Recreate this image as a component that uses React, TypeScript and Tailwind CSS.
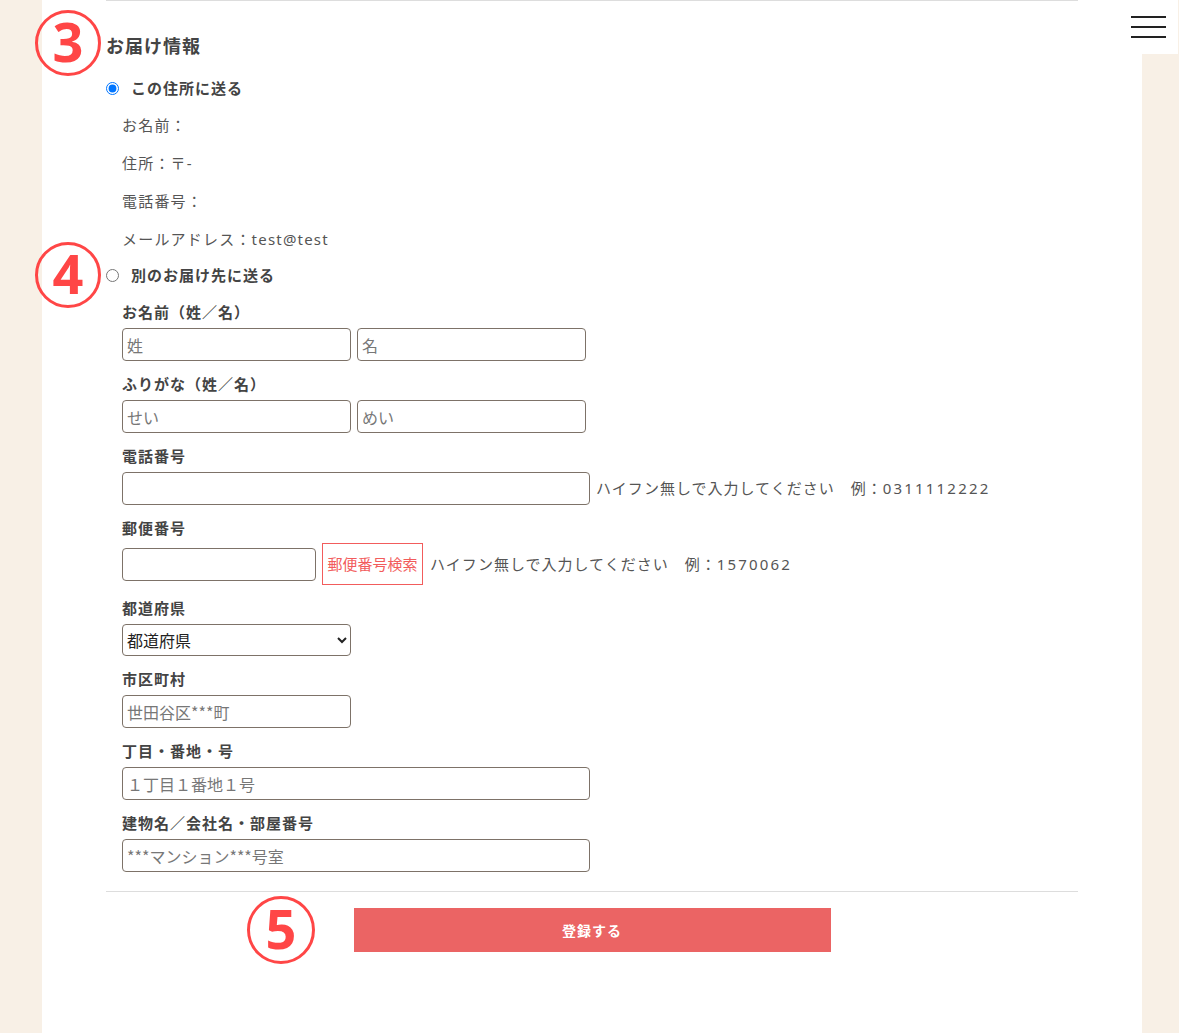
const font = "font-['Noto_Sans','Noto_Sans_CJK_JP',sans-serif]";

function Field({ label, children }: { label: string; children: React.ReactNode }) {
    return (
        <div className="flex flex-col">
            <div className="h-[22px] flex items-center text-[15px] font-bold text-[#444] tracking-[1px] mb-[5px]">{label}</div>
            {children}
        </div>
    );
}

function TextInput({ w, placeholder }: { w: string; placeholder?: string }) {
    return (
        <input
            type="text"
            placeholder={placeholder}
            className={`${w} h-[33px] border border-[#7d7268] rounded-[4px] px-[4px] text-[16px] text-[#333] bg-white font-['Noto_Sans_CJK_JP',sans-serif] placeholder:text-[#777] outline-none`}
        />
    );
}

function Hint({ text, num }: { text: string; num: string }) {
    return (
        <span className="text-[15px] text-[#555] tracking-[1px]">
            {text}　例：<span className="tracking-[2.2px]">{num}</span>
        </span>
    );
}

function Marker({ n, className }: { n: string; className: string }) {
    return (
        <div className={`absolute rounded-full border-[3.5px] border-[#ff4646] flex items-center justify-center text-[#ff4646] font-bold text-[54px] leading-none ${className}`}>
            <span className="-mt-[4px]">{n}</span>
        </div>
    );
}

export default function App() {
    const info = ["お名前：", "住所：〒-", "電話番号：", "メールアドレス：test@test"];
    return (
        <div className={`relative w-full min-h-[1033px] bg-[#f8f0e6] ${font}`}>
            <div className="ml-[42px] w-[1100px] min-h-[1033px] bg-white px-[64px]">
                <div className="h-px bg-[#dddddd]" />

                <h2 className="mt-[33px] h-[24px] flex items-center text-[18px] font-bold text-[#444] tracking-[1px]">お届け情報</h2>

                <label className="mt-[18px] h-[24px] flex items-center gap-[12px]">
                    <input type="radio" name="dest" defaultChecked className="m-0 w-[13px] h-[13px]" />
                    <span className="text-[15px] font-bold text-[#444] tracking-[1px]">この住所に送る</span>
                </label>

                <div className="mt-[6px] pl-[16px] flex flex-col">
                    {info.map((t) => (
                        <div key={t} className="h-[38px] flex items-center text-[15px] text-[#555] tracking-[1.2px]">{t}</div>
                    ))}
                </div>

                <label className="mt-[5px] h-[24px] flex items-center gap-[12px]">
                    <input type="radio" name="dest" className="m-0 w-[13px] h-[13px]" />
                    <span className="text-[15px] font-bold text-[#444] tracking-[1px]">別のお届け先に送る</span>
                </label>

                <div className="mt-[14px] pl-[16px] flex flex-col gap-[12px]">
                    <Field label="お名前（姓／名）">
                        <div className="flex gap-[6px]">
                            <TextInput w="w-[229px]" placeholder="姓" />
                            <TextInput w="w-[229px]" placeholder="名" />
                        </div>
                    </Field>
                    <Field label="ふりがな（姓／名）">
                        <div className="flex gap-[6px]">
                            <TextInput w="w-[229px]" placeholder="せい" />
                            <TextInput w="w-[229px]" placeholder="めい" />
                        </div>
                    </Field>
                    <Field label="電話番号">
                        <div className="flex items-center gap-[6px]">
                            <TextInput w="w-[468px]" />
                            <Hint text="ハイフン無しで入力してください" num="0311112222" />
                        </div>
                    </Field>
                    <div className="flex flex-col">
                        <div className="h-[22px] flex items-center text-[15px] font-bold text-[#444] tracking-[1px] mb-[4px]">郵便番号</div>
                        <div className="h-[42px] flex items-center">
                            <TextInput w="w-[194px]" />
                            <button className="ml-[6px] w-[101px] h-[42px] border border-[#f25c5c] text-[#f25c5c] text-[15px] bg-white">郵便番号検索</button>
                            <span className="ml-[7px]">
                                <Hint text="ハイフン無しで入力してください" num="1570062" />
                            </span>
                        </div>
                    </div>
                    <Field label="都道府県">
                        <select className="w-[229px] h-[32px] border border-[#7d7268] rounded-[4px] pl-0 text-[16px] text-[#222] bg-white font-['Noto_Sans_CJK_JP',sans-serif] outline-none">
                            <option>都道府県</option>
                        </select>
                    </Field>
                    <Field label="市区町村">
                        <TextInput w="w-[229px]" placeholder="世田谷区***町" />
                    </Field>
                    <Field label="丁目・番地・号">
                        <TextInput w="w-[468px]" placeholder="１丁目１番地１号" />
                    </Field>
                    <Field label="建物名／会社名・部屋番号">
                        <TextInput w="w-[468px]" placeholder="***マンション***号室" />
                    </Field>
                </div>

                <div className="mt-[19px] h-px bg-[#dddddd]" />

                <div className="mt-[16px] flex justify-center">
                    <button className="w-[477px] h-[44px] bg-[#eb6464] text-white text-[14px] font-bold tracking-[1px]">登録する</button>
                </div>
            </div>

            <div className="absolute top-0 right-[1px] w-[60px] h-[54px] bg-white flex flex-col items-center justify-center gap-[8px]">
                <div className="w-[35px] h-[2px] bg-[#222]" />
                <div className="w-[35px] h-[2px] bg-[#222]" />
                <div className="w-[35px] h-[2px] bg-[#222]" />
            </div>

            <Marker n="3" className="left-[35px] top-[10px] w-[66px] h-[66px]" />
            <Marker n="4" className="left-[35px] top-[242px] w-[66px] h-[66px]" />
            <Marker n="5" className="left-[247px] top-[896px] w-[68px] h-[68px]" />
        </div>
    );
}
